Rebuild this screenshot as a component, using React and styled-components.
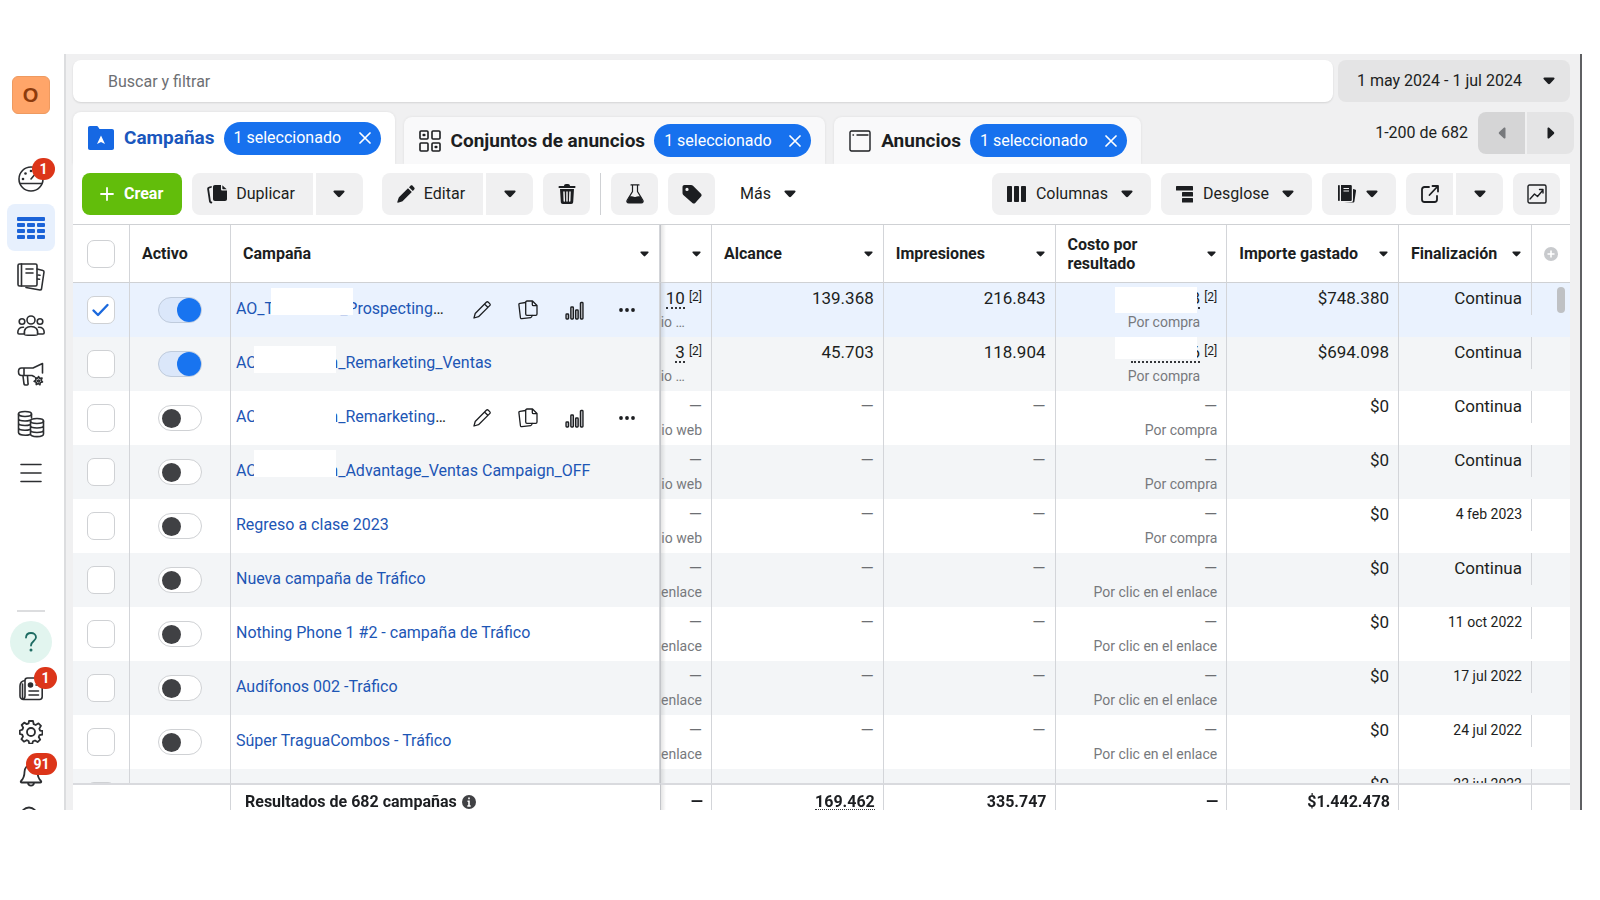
import styled, { createGlobalStyle, css } from "styled-components";

const GlobalStyle = createGlobalStyle`
  *, *::before, *::after {
    box-sizing: border-box;
  }

  body {
    margin: 0;
    background: #fff;
    color: #1c1e21;
    font: 16px/24px Roboto, "Liberation Sans", sans-serif;
  }

  button, input {
    font: inherit;
    color: inherit;
  }

  button {
    border: 0;
    padding: 0;
    background: none;
    cursor: pointer;
  }

  svg {
    display: block;
    flex: none;
  }
`;

const Frame = styled.div`
  display: flex;
  height: calc(100vh - 144px);
  margin: 54px 18px 90px 0;
  overflow: hidden;
  border-right: 2px solid #5f6063;
`;

/* ---------- sidebar ---------- */

const Sidebar = styled.nav`
  flex: none;
  width: 66px;
  padding: 22px 3px 0 0;
  display: flex;
  flex-direction: column;
  align-items: center;
  border-right: 2px solid #dcdddf;
  background: #fff;
`;

const Avatar = styled.button`
  flex: none;
  width: 38px;
  height: 38px;
  margin-bottom: 41px;
  border: 1px solid #ee9a60;
  border-radius: 6px;
  background: #ffa569;
  color: #8d3b0c;
  font-family: "Liberation Sans", sans-serif;
  font-size: 20px;
  font-weight: 700;
`;

const NavItem = styled.button`
  flex: none;
  position: relative;
  display: flex;
  align-items: center;
  justify-content: center;
  width: 48px;
  height: ${(p) => (p.$compact ? 43 : 47)}px;
  margin-bottom: ${(p) => (p.$compact ? 0 : 2)}px;
  border-radius: 8px;
  background: ${(p) => (p.$active ? "#e7f0fd" : "none")};
  color: ${(p) => (p.$active ? "#1b63d8" : "#2c2e31")};
`;

const Badge = styled.span`
  position: absolute;
  top: ${(p) => (p.$compact ? 0 : 3)}px;
  right: ${(p) => (p.$compact ? -2 : 0)}px;
  min-width: 22px;
  padding: 0 7px;
  border-radius: 11px;
  background: #dc3519;
  color: #fff;
  font-size: 14px;
  font-weight: 700;
  line-height: 22px;
  text-align: center;
`;

const NavRule = styled.hr`
  flex: none;
  width: 28px;
  margin: auto 0 9px;
  border: 0;
  border-top: 2px solid #dcdddf;
`;

const HelpButton = styled.button`
  flex: none;
  display: flex;
  align-items: center;
  justify-content: center;
  width: 42px;
  height: 42px;
  margin-bottom: 4px;
  border-radius: 50%;
  background: #e2f5ef;
  color: #1d6b62;
`;

const NavBottom = styled.div`
  flex: none;
  display: flex;
  flex-direction: column;
  align-items: center;
  height: 189px;
`;

/* ---------- top area ---------- */

const Main = styled.main`
  flex: 1;
  min-width: 0;
  display: flex;
  flex-direction: column;
  padding: 6px 10px 0 7px;
  background: #f0f0f1;
`;

const SearchRow = styled.div`
  flex: none;
  display: flex;
  gap: 5px;
`;

const SearchInput = styled.input`
  flex: 1;
  min-width: 0;
  height: 42px;
  padding: 0 35px;
  border: 0;
  border-radius: 8px;
  background: #fff;
  box-shadow: 0 1px 2px rgba(0, 0, 0, 0.12);

  &::placeholder {
    color: #6d6f73;
    opacity: 1;
  }
`;

const DateButton = styled.button`
  display: flex;
  align-items: center;
  justify-content: space-between;
  width: 232px;
  height: 42px;
  padding: 0 15px 0 19px;
  border-radius: 8px;
  background: #e4e4e5;
`;

const TabsRow = styled.div`
  flex: none;
  display: flex;
  align-items: flex-end;
  gap: 9px;
  height: 62px;
`;

const Tab = styled.div`
  display: flex;
  align-items: center;
  gap: 9px;
  height: ${(p) => (p.$active ? 52 : 47)}px;
  padding: 0 14px 0 15px;
  border-radius: 8px 8px 0 0;
  background: ${(p) => (p.$active ? "#fff" : "#f9f9fa")};
  color: ${(p) => (p.$active ? "#1a57bd" : "#1c1e21")};
  box-shadow: 0 0 3px rgba(0, 0, 0, 0.08);

  > svg {
    margin-right: 1px;
  }
`;

const TabTitle = styled.a`
  color: inherit;
  font-size: 19px;
  font-weight: 700;
  text-decoration: none;
`;

const Pill = styled.button`
  display: flex;
  align-items: center;
  justify-content: space-between;
  width: 157px;
  height: 33px;
  padding: 0 10px;
  border-radius: 17px;
  background: #1771ee;
  color: #fff;
  white-space: nowrap;
`;

const Pager = styled.div`
  align-self: flex-start;
  display: flex;
  align-items: center;
  margin: 10px -4px 0 auto;
`;

const PagerText = styled.span`
  margin-right: 10px;
`;

const PagerButton = styled.button`
  display: flex;
  align-items: center;
  justify-content: center;
  width: 47px;
  height: 42px;
  background: #e4e4e5;
  border-radius: 0 8px 8px 0;

  &:first-of-type {
    margin-right: 2px;
    border-radius: 8px 0 0 8px;
  }

  &:disabled {
    background: #d5d5d6;
    color: #77797c;
  }
`;

/* ---------- toolbar ---------- */

const Panel = styled.section`
  flex: 1;
  min-height: 0;
  display: flex;
  flex-direction: column;
  background: #fff;
`;

const Toolbar = styled.div`
  flex: none;
  display: flex;
  align-items: center;
  gap: 10px;
  height: 61px;
  padding: 0 10px 0 9px;
  border-bottom: 1px solid #cfd1d4;
`;

const ToolButton = styled.button`
  display: flex;
  align-items: center;
  justify-content: center;
  gap: 9px;
  height: 42px;
  min-width: 47px;
  padding: ${(p) => (p.$wide ? "0 18px 0 15px" : "0 13px")};
  border-radius: 8px;
  background: ${(p) => (p.$plain ? "none" : "#f0f0f1")};
  white-space: nowrap;
`;

const CreateButton = styled(ToolButton)`
  gap: 10px;
  padding: 0 19px 0 18px;
  background: #62bd0b;
  color: #fff;
  font-weight: 700;
`;

const Split = styled.div`
  display: flex;
  gap: 3px;
  margin-right: ${(p) => (p.$spaced ? 9 : 0)}px;

  ${ToolButton}:first-child {
    border-radius: 8px 0 0 8px;
  }

  ${ToolButton}:last-child {
    border-radius: 0 8px 8px 0;
  }
`;

const Divider = styled.span`
  width: 1px;
  height: 42px;
  background: #cfd1d4;
`;

const Spacer = styled.span`
  flex: 1;
`;

const CaretGap = styled.span`
  margin-left: 4px;
`;

/* ---------- table ---------- */

const TableArea = styled.div`
  flex: 1;
  min-height: 0;
  overflow: hidden;
`;

const Table = styled.table`
  width: 100%;
  table-layout: fixed;
  border-spacing: 0;
`;

const line = "1px solid #d3d5d9";

const edgeShadow = css`
  border-left: 1px solid #c3c5c9;
  background-image: linear-gradient(to right, rgba(0, 0, 0, 0.1), transparent 5px);
`;

const HeadCell = styled.th`
  height: 58px;
  padding: ${(p) => (p.$center ? 0 : "0 10px 0 12px")};
  border-right: ${(p) => (p.$open ? "0" : line)};
  border-bottom: 1px solid #cfd1d4;
  line-height: 19px;
  text-align: ${(p) => (p.$center ? "center" : "left")};
  ${(p) => p.$edge && edgeShadow}
`;

const HeadInner = styled.div`
  display: flex;
  align-items: center;
  justify-content: space-between;
`;

const Row = styled.tr`
  background: ${(p) => (p.$selected ? "#eaf2fe" : "#fff")};

  &:nth-child(even) {
    background: #f3f5f7;
  }
`;

const Cell = styled.td`
  height: 54px;
  padding: 0;
  border-right: ${(p) => (p.$open ? "0" : line)};
  vertical-align: ${(p) => (p.$middle ? "middle" : "top")};
  ${(p) => p.$edge && edgeShadow}
`;

const Checkbox = styled.input`
  appearance: none;
  display: block;
  width: 28px;
  height: 28px;
  margin: 0 auto;
  border: 1px solid #cfd1d4;
  border-radius: 7px;
  background: #fff;

  &:checked {
    background: #fff
      url("data:image/svg+xml,%3Csvg xmlns='http://www.w3.org/2000/svg' viewBox='0 0 28 28'%3E%3Cpath d='M6.500 14.500l4.500 4.500 9.500-10' fill='none' stroke='%231b69dd' stroke-width='2.400' stroke-linecap='round' stroke-linejoin='round'/%3E%3C/svg%3E")
      center / 28px 28px no-repeat;
  }
`;

const Toggle = styled.input`
  appearance: none;
  display: flex;
  align-items: center;
  width: 44px;
  height: 26px;
  margin: 0 auto;
  padding: 0 3px;
  border: 1px solid #cfd1d4;
  border-radius: 13px;
  background: #fff;

  &::before {
    content: "";
    width: 19px;
    height: 19px;
    border-radius: 50%;
    background: #404144;
  }

  &:checked {
    justify-content: flex-end;
    padding: 0;
    border-color: #bfcbdc;
    background: #dbe7fa;
  }

  &:checked::before {
    width: 24px;
    height: 24px;
    background: #1874f0;
  }
`;

const NameRow = styled.div`
  display: flex;
  align-items: center;
  justify-content: space-between;
  padding: 0 24px 0 5px;
`;

const NameLink = styled.a`
  color: #1d56b5;
  text-decoration: none;
  white-space: nowrap;
  padding-bottom: 3px;
`;

const NameText = styled.span`
  display: flex;
  align-items: center;
  height: 24px;
`;

const Mask = styled.span`
  flex: none;
  position: relative;
  z-index: 1;
  width: 82px;
  height: 27px;
  margin: 0 ${(p) => -p.$tuck}px ${(p) => p.$lift}px -3px;
  background: #fff;
`;

const Ellipsis = styled.span`
  color: #1c1e21;
`;

const Actions = styled.span`
  display: flex;
  align-items: center;
  gap: 27px;

  button:last-child {
    margin-left: 8px;
  }
`;

const Metric = styled.div`
  display: flex;
  justify-content: flex-end;
  gap: 4px;
  height: ${(p) => (p.$short ? 32 : 54)}px;
  padding: 3px 9px 0 0;
  overflow: hidden;
  border-right: ${(p) => (p.$short ? line : "0")};
  text-align: right;
  white-space: nowrap;
`;

const Value = styled.div`
  font-size: ${(p) => (p.$small ? 14 : 17)}px;
  color: ${(p) => (p.$muted ? "#6d6f73" : "inherit")};
`;

const Sub = styled.div`
  color: #77797d;
  font-size: 14px;
`;

const Note = styled.a`
  color: inherit;
  font-size: 12px;
  line-height: 22px;
  text-decoration: none;
`;

const Dotted = styled.span`
  display: inline-block;
  min-width: ${(p) => (p.$cost ? 69 : 0)}px;
  border-bottom: 2px dotted #34363a;
  line-height: 17px;
`;

const CostMask = styled.span`
  position: absolute;
  top: ${(p) => (p.$high ? -7 : 1)}px;
  right: 3px;
  width: 82px;
  height: 26px;
  background: #fff;
`;

const CostBox = styled.div`
  position: relative;
`;

const ScrollThumb = styled.div`
  width: 8px;
  height: 26px;
  margin: 4px 5px 0 auto;
  border-radius: 4px;
  background: #bfc1c4;
`;

const AddColumn = styled.button`
  display: block;
  margin: 0 auto;
  color: #c8cacd;
`;

const FootCell = styled.td`
  position: sticky;
  bottom: 0;
  z-index: 2;
  padding: 0;
  border-top: 2px solid #d9dade;
  border-right: ${(p) => (p.$open ? "0" : line)};
  background-color: #fff;
  font-weight: 700;
  ${(p) => p.$edge && edgeShadow}
`;

const FootInner = styled.div`
  display: flex;
  align-items: center;
  justify-content: ${(p) => (p.$left ? "flex-start" : "flex-end")};
  gap: 5px;
  height: 25px;
  padding: 9px 8px 0 14px;
  line-height: 16px;
  white-space: nowrap;

  ${Dotted} {
    border-bottom-width: 1px;
    line-height: 15px;
  }
`;

/* ---------- icons ---------- */

const Icon = ({ size = 26, box = 26, width = 1.8, children }) => (
  <svg
    width={size}
    height={size}
    viewBox={`0 0 ${box} ${box}`}
    fill="none"
    stroke="currentColor"
    strokeWidth={width}
    strokeLinecap="round"
    strokeLinejoin="round"
    aria-hidden="true"
  >
    {children}
  </svg>
);

const Caret = ({ small }) => (
  <svg width={small ? 9 : 12} height={small ? 6 : 8} viewBox="0 0 12 8" fill="currentColor" aria-hidden="true">
    <path d="M1.500.5h9c1 0 1.400 1 .7 1.700L7 6.800c-.6.600-1.400.600-2 0L.8 2.200C.1 1.500.5.5 1.500.5z" />
  </svg>
);

const Side = ({ left }) => (
  <svg width="8" height="12" viewBox="0 0 8 12" fill="currentColor" aria-hidden="true">
    {left ? (
      <path d="M7.500 1.500v9c0 1-1 1.400-1.700.7L1.200 7c-.6-.6-.6-1.400 0-2L5.800.8C6.500.1 7.500.5 7.500 1.500z" />
    ) : (
      <path d="M.5 1.500v9c0 1 1 1.400 1.700.7L6.800 7c.6-.6.600-1.400 0-2L2.200.8C1.500.1.5.5.5 1.500z" />
    )}
  </svg>
);

const GaugeIcon = () => (
  <Icon width={1.6}>
    <circle cx="13" cy="13" r="12" />
    <path d="M2.500 17.500h21M13 13l5-6" />
    <g fill="currentColor" stroke="none">
      <circle cx="5" cy="13" r="1.300" />
      <circle cx="7.500" cy="7.500" r="1.300" />
      <circle cx="13" cy="5" r="1.300" />
    </g>
  </Icon>
);

const GridIcon = () => (
  <svg width="28" height="24" viewBox="0 0 28 24" fill="currentColor" aria-hidden="true">
    <rect x="0" y="1" width="28" height="4" rx="1" />
    {[7, 13, 19].map((y) =>
      [0, 10, 20].map((x) => <rect key={`${x}-${y}`} x={x} y={y} width="8" height="4" rx="1" />)
    )}
  </svg>
);

const BooksIcon = () => (
  <Icon size={28} box={28} width={1.6}>
    <rect x="1" y="1" width="19" height="22" rx="1.500" />
    <path d="M4.500 1v22M9 6h7M9 10h7M20 6l6 1.500c1 .2 1 .8 1 1.500l-2.500 17c-.2 1-.8 1-1.500 1L9 24.500M21 12l2 .3M20.500 16l2 .3" />
  </Icon>
);

const PeopleIcon = () => (
  <Icon size={28} box={28} width={1.6}>
    <circle cx="14" cy="8" r="4" />
    <circle cx="5" cy="9.500" r="2.800" />
    <circle cx="23" cy="9.500" r="2.800" />
    <path d="M7.500 22.500c-1-6 2.500-8 6.500-8s7.500 2 6.500 8c-.2 1-12.800 1-13 0zM6.500 22H2c-1 0-1.200-.5-1.200-1.500 0-3.500 2-5.500 5.700-5.300M21.500 22H26c1 0 1.200-.5 1.200-1.500 0-3.500-2-5.500-5.700-5.300" />
  </Icon>
);

const MegaphoneIcon = () => (
  <Icon size={28} box={28} width={1.6}>
    <path d="M25.500 12V2.500L16 7H4.500C2 7 1.500 9 1.500 10.500s.5 4 3 4H15l2.500 1.200M7 7v7.500M6 15l1 8c.2 1 .8 1 1.500 1h1.500c1 0 1.200-.5 1-1.500l-.5-7.500" />
    <path d="M21.500 15.500l1.200 1.900 2.300-.3-.9 2.200 1.400 1.700-2.200.5-.4 2.300-1.600-1.300-2 1.100-.1-2.300-2.100-1 1.900-1.300-.4-2.300 2.100.6z" />
    <circle cx="21.500" cy="20" r="1" />
  </Icon>
);

const CoinsIcon = () => (
  <Icon size={28} box={28} width={1.6}>
    <ellipse cx="8" cy="4" rx="6.500" ry="2.500" />
    <path d="M1.500 4v18.500c0 1.500 3 2.800 7 2.800 1.500 0 3-.2 4.500-.8M14.500 4v4M1.500 8.500c0 1.500 3 2.500 6.500 2.500 2 0 3.500-.2 5-.8M1.500 13c0 1.500 3 2.500 6.500 2.500 2 0 3.500-.2 5-.8M1.500 17.800c0 1.500 3 2.500 6.500 2.500 2 0 3.500-.2 5-.8" />
    <ellipse cx="20" cy="11" rx="6.500" ry="2.500" />
    <path d="M13.500 11v13c0 1.500 3 2.600 6.500 2.600s6.500-1.100 6.500-2.600V11M13.500 15.500c0 1.500 3 2.500 6.500 2.500s6.500-1 6.500-2.500M13.500 20c0 1.500 3 2.500 6.500 2.500s6.500-1 6.500-2.500" />
  </Icon>
);

const MenuIcon = () => (
  <Icon size={28} box={28} width={1.6}>
    <path d="M4 5.500h20M4 14h20M4 22.500h20" />
  </Icon>
);

const HelpIcon = () => (
  <Icon size={22} box={22} width={1.800}>
    <path d="M6 6.500C6.200 3.500 8.500 2 11 2c2.800 0 5 1.700 5 4.300 0 3.700-5 3.700-5 8.200" />
    <circle cx="11" cy="19" r="1" fill="currentColor" stroke="none" />
    <circle cx="11" cy="19" r=".6" />
  </Icon>
);

const NewsIcon = () => (
  <Icon size={24} box={24} width={1.600}>
    <path d="M6 3.500C6 2 7 1 8.500 1H21c1.500 0 2.200 1 2.200 2.500v16c0 1.800-1 3-2.700 3H4.500C2.500 22.500 1 21 1 19V9c0-3 2-5 5-5.500zM6 3.500V19c0 2-.8 3-2.500 3.200M3.500 7v14" />
    <circle cx="11.500" cy="8" r="2" fill="currentColor" />
    <path d="M10 14h9.500M10 18h9.500M17 8h2.500" />
  </Icon>
);

const GearIcon = () => (
  <Icon size={24} box={24} width={1.800}>
    <circle cx="12" cy="12" r="4" />
    <path d="M10 1h4l.7 3.200 2 .8 2.800-1.700 2.500 2.500L20.300 8.600l.8 2L23.500 11v3.500l-3 .7-.8 1.800 1.500 2.600-2.600 2.500-2.600-1.600-2 .8-.7 2.400h-3L9.600 21l-2-.8-2.700 1.500-2.500-2.500L4 16.600l-.8-2L.8 14v-3.500l2.600-.8.8-2L2.700 5l2.500-2.400 2.600 1.500 1.800-.7z" />
  </Icon>
);

const BellIcon = () => (
  <Icon size={24} box={24} width={1.800}>
    <path d="M12 2c-4 0-6.500 3-6.500 7 0 5-1.500 7-3.500 9-.6.700-.2 1.500.8 1.500h18.400c1 0 1.400-.8.8-1.500-2-2-3.500-4-3.500-9 0-4-2.500-7-6.500-7zM9 20c.3 3.500 5.700 3.500 6 0" />
  </Icon>
);

const SearchIcon = () => (
  <Icon size={24} box={24} width={1.800}>
    <circle cx="10" cy="9.500" r="8" />
    <path d="M16 15.500l7 7" />
  </Icon>
);

const FolderIcon = () => (
  <svg width="26" height="24" viewBox="0 0 26 24" aria-hidden="true">
    <path d="M2 0h6.500c.8 0 1.200.3 1.700 1l1.300 2H24c1.300 0 2 .8 2 2v17c0 1.300-.7 2-2 2H2c-1.300 0-2-.7-2-2V2C0 .8.700 0 2 0z" fill="#1668e3" />
    <path d="M13 9.500l4 8.500-4-2-4 2z" fill="#fff" />
  </svg>
);

const SquaresIcon = () => (
  <Icon size={22} box={22} width={1.600}>
    <rect x="1" y="1" width="8" height="8" rx="1" />
    <rect x="13" y="1" width="8" height="8" rx="1" />
    <rect x="1" y="13" width="8" height="8" rx="1" />
    <rect x="13" y="13" width="8" height="8" rx="1" />
    <path d="M4.700 5h.6M16.700 17h.6" strokeWidth="2.600" />
  </Icon>
);

const WindowIcon = () => (
  <Icon size={22} box={22} width={1.400}>
    <rect x="1" y="1" width="20" height="20" rx="1.500" />
    <path d="M8 5h11M4 5h.5" />
  </Icon>
);

const CloseIcon = () => (
  <Icon size={12} box={12} width={1.700}>
    <path d="M1 1l10 10M11 1L1 11" />
  </Icon>
);

const PlusIcon = () => (
  <Icon size={14} box={14} width={1.800}>
    <path d="M7 1v12M1 7h12" />
  </Icon>
);

const DuplicateIcon = () => (
  <svg width="20" height="20" viewBox="0 0 20 20" fill="currentColor" aria-hidden="true">
    <path d="M8 1h6v4c0 1 .5 1.500 1.500 1.500H20V15c0 1.300-.7 2-2 2H8c-1.300 0-2-.7-2-2V3c0-1.300.7-2 2-2z" />
    <path d="M15.300 1.200l4.400 4.100h-3.600c-.5 0-.8-.3-.8-.8z" />
    <path d="M4 3L2 3.600c-.8.200-1 .7-.9 1.400L3 17.500c.1.800.6 1.100 1.400 1" fill="none" stroke="currentColor" strokeWidth="1.800" strokeLinecap="round" />
  </svg>
);

const PencilIcon = () => (
  <svg width="18" height="18" viewBox="0 0 18 18" fill="currentColor" aria-hidden="true">
    <path d="M11 3.200L14.800 7 6 15.800c-.3.300-.6.500-1 .6L.9 17.700c-.4.100-.7-.2-.6-.6L1.600 13c.1-.4.300-.7.600-1zM12 2.200L13.500.8c.6-.6 1.500-.6 2.100 0l1.600 1.600c.6.600.6 1.500 0 2.100L15.800 6z" />
  </svg>
);

const TrashIcon = () => (
  <svg width="18" height="20" viewBox="0 0 18 20" fill="currentColor" aria-hidden="true">
    <path d="M6 2c0-1.200.8-2 2-2h2c1.200 0 2 .8 2 2h4.500c.8 0 1 .4 1 .9s-.3 1-1 1h-15c-.7 0-1-.4-1-1s.3-.9 1-.9z" />
    <path d="M2 5h14l-.8 13c-.1 1.200-.8 2-2 2H4.800c-1.200 0-1.900-.8-2-2z" />
    <path d="M6 8l.3 9M9 8v9M12 8l-.3 9" stroke="#f0f0f1" strokeWidth="1.500" strokeLinecap="round" />
  </svg>
);

const FlaskIcon = () => (
  <svg width="18" height="20" viewBox="0 0 18 20" aria-hidden="true">
    <path d="M5 .9h8M6.500 1v6.500L1.300 16c-.9 1.600-.3 3 1.500 3h12.400c1.800 0 2.400-1.400 1.500-3l-5.200-8.500V1" fill="none" stroke="currentColor" strokeWidth="1.200" strokeLinecap="round" />
    <path d="M3.500 12.500c2-.8 4.300.8 5.800.4 1.500-.5 3.200-.7 5.200-.4l2.200 4c.6 1.500.2 2.500-1.500 2.500H2.800c-1.700 0-2.100-1-1.500-2.500z" fill="currentColor" />
  </svg>
);

const TagIcon = () => (
  <svg width="20" height="20" viewBox="0 0 20 20" fill="currentColor" fillRule="evenodd" aria-hidden="true">
    <path d="M2.500 1H9c.8 0 1.500.2 2 .8l8 8c.8.800.8 2 0 2.800l-5.800 6.300c-.8.800-2 .8-2.800 0L1.300 11C.7 10.400.500 9.700.500 9V3c0-1.200.8-2 2-2zM5 3.800a1.600 1.600 0 1 0 0 3.200 1.600 1.600 0 0 0 0-3.200z" />
  </svg>
);

const ColumnsIcon = () => (
  <svg width="20" height="16" viewBox="0 0 20 16" fill="currentColor" aria-hidden="true">
    <rect x="0" width="5" height="16" rx=".8" />
    <rect x="7" width="5" height="16" rx=".8" />
    <rect x="14" width="5" height="16" rx=".8" />
  </svg>
);

const BreakdownIcon = () => (
  <svg width="18" height="18" viewBox="0 0 18 18" fill="currentColor" aria-hidden="true">
    <rect x="0" y="1" width="17" height="4.500" rx=".6" />
    <rect x="6" y="7" width="11" height="4.500" rx=".6" />
    <rect x="6" y="13" width="11" height="4.500" rx=".6" />
  </svg>
);

const ReportsIcon = () => (
  <svg width="20" height="20" viewBox="0 0 20 20" fill="currentColor" aria-hidden="true">
    <rect x="1" y="1" width="1.800" height="16" rx=".8" />
    <path d="M4 1h9.500c.8 0 1.300.5 1.300 1.300v13.400c0 .8-.5 1.300-1.300 1.300H4z" />
    <path d="M16 5l2 .4c.8.100 1.200.7 1 1.500l-1.600 10.600c-.1.900-.7 1.200-1.500 1.100L7 18h7.500c1 0 1.500-.6 1.500-1.500z" />
    <path d="M6.500 4.500h5.500M6.500 7h5.500" stroke="#f0f0f1" strokeWidth="1.200" />
  </svg>
);

const ExportIcon = () => (
  <Icon size={18} box={18} width={1.800}>
    <path d="M8 2H3.500C2 2 1 3 1 4.500v10C1 16 2 17 3.500 17h10c1.500 0 2.500-1 2.500-2.500V11M11.500 1H17v5.500M16.500 1.500L8.500 10" />
  </Icon>
);

const ChartIcon = () => (
  <Icon size={20} box={20} width={1.400}>
    <rect x="1" y="1" width="18" height="18" rx="1.500" />
    <path d="M3 15l4.500-5 3 2.500L16 6M12.500 5.500H16V9" />
  </Icon>
);

const EditOutlineIcon = () => (
  <Icon size={18} box={18} width={1.300}>
    <path d="M13.300 1.200c.7-.7 1.400-.6 2 0l1.400 1.400c.7.700.7 1.400 0 2L5.500 15.700 1 17l1.200-4.500zM11.500 3l3.300 3.300" />
  </Icon>
);

const CopyOutlineIcon = () => (
  <Icon size={20} box={20} width={1.300}>
    <path d="M9 1h5.500L19 5.500V14c0 .8-.5 1.300-1.300 1.300H9c-.8 0-1.300-.5-1.300-1.300V2.300C7.700 1.500 8.200 1 9 1zM14.300 1.200v3.300c0 .8.500 1.200 1.200 1.200h3.300" />
    <path d="M7.500 2.500l-5.500.8c-.8.100-1.200.6-1.100 1.400l1.500 12.800c.1.800.6 1.200 1.400 1.100l9-1c.8-.1 1.200-.6 1.300-2.300" />
  </Icon>
);

const BarsIcon = () => (
  <Icon size={19} box={19} width={1.300}>
    <g fill="#b4b6ba">
      <rect x="1" y="13" width="2.600" height="5" rx=".8" />
      <rect x="5.800" y="6" width="2.600" height="12" rx=".8" />
      <rect x="10.600" y="9" width="2.600" height="9" rx=".8" />
      <rect x="15.400" y="1.500" width="2.600" height="16.500" rx=".8" />
    </g>
  </Icon>
);

const DotsIcon = () => (
  <svg width="16" height="6" viewBox="0 0 16 6" fill="currentColor" aria-hidden="true">
    <circle cx="2" cy="3" r="1.900" />
    <circle cx="8" cy="3" r="1.900" />
    <circle cx="14" cy="3" r="1.900" />
  </svg>
);

const AddIcon = () => (
  <svg width="14" height="14" viewBox="0 0 14 14" aria-hidden="true">
    <circle cx="7" cy="7" r="7" fill="currentColor" />
    <path d="M7 3.500v7M3.500 7h7" stroke="#fff" strokeWidth="1.600" />
  </svg>
);

const InfoIcon = () => (
  <svg width="14" height="14" viewBox="0 0 14 14" aria-hidden="true">
    <circle cx="7" cy="7" r="7" fill="#404144" />
    <path d="M7 2.500v1.800M5.500 6.300H7V11M5.300 11h3.400" stroke="#fff" strokeWidth="1.600" fill="none" />
  </svg>
);

/* ---------- data ---------- */

const rows = [
  { start: "AO_T", end: "_Prospecting", cut: true, tuck: 13, lift: 15, on: true, selected: true, actions: true, result: "10", resultSub: "io …", reach: "139.368", impressions: "216.843", cost: "8", costSub: "Por compra", spent: "$748.380", ends: "Continua" },
  { start: "AO", end: "n_Remarketing_Ventas", tuck: 7, lift: 7, on: true, result: "3", resultSub: "io …", reach: "45.703", impressions: "118.904", cost: "6", costSub: "Por compra", spent: "$694.098", ends: "Continua" },
  { start: "AO", end: "n_Remarketing", cut: true, tuck: 7, lift: 7, actions: true, resultSub: "io web", costSub: "Por compra", spent: "$0", ends: "Continua" },
  { start: "AO", end: "n_Advantage_Ventas Campaign_OFF", tuck: 7, lift: 14, resultSub: "io web", costSub: "Por compra", spent: "$0", ends: "Continua" },
  { name: "Regreso a clase 2023", resultSub: "io web", costSub: "Por compra", spent: "$0", ends: "4 feb 2023" },
  { name: "Nueva campaña de Tráfico", resultSub: "enlace", costSub: "Por clic en el enlace", spent: "$0", ends: "Continua" },
  { name: "Nothing Phone 1 #2 - campaña de Tráfico", resultSub: "enlace", costSub: "Por clic en el enlace", spent: "$0", ends: "11 oct 2022" },
  { name: "Audífonos 002 -Tráfico", resultSub: "enlace", costSub: "Por clic en el enlace", spent: "$0", ends: "17 jul 2022" },
  { name: "Súper TraguaCombos - Tráfico", resultSub: "enlace", costSub: "Por clic en el enlace", spent: "$0", ends: "24 jul 2022" },
  { name: "", spent: "$0", ends: "22 jul 2022", last: true },
];

/* ---------- parts ---------- */

function SelectedPill() {
  return (
    <Pill>
      1 seleccionado
      <CloseIcon />
    </Pill>
  );
}

function Heading({ label, ...rest }) {
  return (
    <HeadCell {...rest}>
      <HeadInner>
        <span>{label}</span>
        <Caret small />
      </HeadInner>
    </HeadCell>
  );
}

function CampaignRow({ row, index }) {
  // the last row is mostly under the totals, so it has no dashes to show
  const dash = row.last ? null : <Value $muted>—</Value>;
  return (
    <Row $selected={row.selected}>
      <Cell $middle>
        <Checkbox type="checkbox" aria-label={`Seleccionar fila ${index + 1}`} defaultChecked={row.selected} />
      </Cell>
      <Cell $middle>
        <Toggle type="checkbox" role="switch" aria-label={`Activar fila ${index + 1}`} defaultChecked={row.on} />
      </Cell>
      <Cell $middle>
        <NameRow>
          <NameLink href="#">
            {row.start ? (
              <NameText>
                {row.start}
                <Mask $tuck={row.tuck} $lift={row.lift} />
                {row.end}
                {row.cut && <Ellipsis>…</Ellipsis>}
              </NameText>
            ) : (
              row.name
            )}
          </NameLink>
          {row.actions && (
            <Actions>
              <button aria-label="Editar"><EditOutlineIcon /></button>
              <button aria-label="Duplicar"><CopyOutlineIcon /></button>
              <button aria-label="Ver gráficos"><BarsIcon /></button>
              <button aria-label="Más opciones"><DotsIcon /></button>
            </Actions>
          )}
        </NameRow>
      </Cell>
      <Cell $edge>
        <Metric>
          <div>
            {row.result ? <Value><Dotted>{row.result}</Dotted></Value> : dash}
            <Sub>{row.resultSub}</Sub>
          </div>
          {row.result && <Note href="#">[2]</Note>}
        </Metric>
      </Cell>
      <Cell><Metric>{row.reach ? <Value>{row.reach}</Value> : dash}</Metric></Cell>
      <Cell><Metric>{row.impressions ? <Value>{row.impressions}</Value> : dash}</Metric></Cell>
      <Cell>
        <Metric>
          <CostBox>
            {row.cost ? <Value><Dotted $cost>{row.cost}</Dotted></Value> : dash}
            {row.cost && <CostMask $high={!row.selected} />}
            <Sub>{row.costSub}</Sub>
          </CostBox>
          {row.cost && <Note href="#">[2]</Note>}
        </Metric>
      </Cell>
      <Cell><Metric><Value>{row.spent}</Value></Metric></Cell>
      <Cell $open>
        <Metric $short>
          <Value $small={row.ends !== "Continua"}>{row.ends}</Value>
        </Metric>
      </Cell>
      <Cell $open>{index === 0 && <ScrollThumb />}</Cell>
    </Row>
  );
}

export default function App() {
  return (
    <>
      <GlobalStyle />
      <Frame>
        <Sidebar>
          <Avatar>O</Avatar>
          <NavItem aria-label="Resumen de la cuenta"><GaugeIcon /><Badge>1</Badge></NavItem>
          <NavItem aria-label="Campañas" $active><GridIcon /></NavItem>
          <NavItem aria-label="Informes"><BooksIcon /></NavItem>
          <NavItem aria-label="Públicos"><PeopleIcon /></NavItem>
          <NavItem aria-label="Configuración de anuncios"><MegaphoneIcon /></NavItem>
          <NavItem aria-label="Facturación"><CoinsIcon /></NavItem>
          <NavItem aria-label="Todas las herramientas"><MenuIcon /></NavItem>
          <NavRule />
          <NavBottom>
            <HelpButton aria-label="Ayuda"><HelpIcon /></HelpButton>
            <NavItem $compact aria-label="Novedades"><NewsIcon /><Badge $compact>1</Badge></NavItem>
            <NavItem $compact aria-label="Configuración"><GearIcon /></NavItem>
            <NavItem $compact aria-label="Notificaciones"><BellIcon /><Badge $compact>91</Badge></NavItem>
            <NavItem $compact aria-label="Buscar"><SearchIcon /></NavItem>
          </NavBottom>
        </Sidebar>

        <Main>
          <SearchRow>
            <SearchInput placeholder="Buscar y filtrar" aria-label="Buscar y filtrar" />
            <DateButton>
              1 may 2024 - 1 jul 2024
              <Caret />
            </DateButton>
          </SearchRow>

          <TabsRow>
            <Tab $active>
              <FolderIcon />
              <TabTitle href="#">Campañas</TabTitle>
              <SelectedPill />
            </Tab>
            <Tab>
              <SquaresIcon />
              <TabTitle href="#">Conjuntos de anuncios</TabTitle>
              <SelectedPill />
            </Tab>
            <Tab>
              <WindowIcon />
              <TabTitle href="#">Anuncios</TabTitle>
              <SelectedPill />
            </Tab>
            <Pager>
              <PagerText>1-200 de 682</PagerText>
              <PagerButton disabled aria-label="Anterior"><Side left /></PagerButton>
              <PagerButton aria-label="Siguiente"><Side /></PagerButton>
            </Pager>
          </TabsRow>

          <Panel>
            <Toolbar>
              <CreateButton><PlusIcon />Crear</CreateButton>
              <Split $spaced>
                <ToolButton $wide><DuplicateIcon />Duplicar</ToolButton>
                <ToolButton aria-label="Opciones de duplicar"><Caret /></ToolButton>
              </Split>
              <Split>
                <ToolButton $wide><PencilIcon />Editar</ToolButton>
                <ToolButton aria-label="Opciones de edición"><Caret /></ToolButton>
              </Split>
              <ToolButton aria-label="Eliminar"><TrashIcon /></ToolButton>
              <Divider />
              <ToolButton aria-label="Prueba A/B"><FlaskIcon /></ToolButton>
              <ToolButton aria-label="Etiquetas"><TagIcon /></ToolButton>
              <ToolButton $plain $wide>Más<CaretGap><Caret /></CaretGap></ToolButton>
              <Spacer />
              <ToolButton $wide><ColumnsIcon />Columnas<CaretGap><Caret /></CaretGap></ToolButton>
              <ToolButton $wide><BreakdownIcon />Desglose<CaretGap><Caret /></CaretGap></ToolButton>
              <ToolButton $wide aria-label="Informes"><ReportsIcon /><Caret /></ToolButton>
              <Split>
                <ToolButton aria-label="Exportar"><ExportIcon /></ToolButton>
                <ToolButton aria-label="Opciones de exportación"><Caret /></ToolButton>
              </Split>
              <ToolButton aria-label="Gráficos"><ChartIcon /></ToolButton>
            </Toolbar>

            <TableArea>
              <Table>
                <colgroup>
                  <col width="57" />
                  <col width="101" />
                  <col width="429" />
                  <col width="52" />
                  <col span="4" />
                  <col width="133" />
                  <col width="38" />
                </colgroup>
                <thead>
                  <tr>
                    <HeadCell $center><Checkbox type="checkbox" aria-label="Seleccionar todo" /></HeadCell>
                    <HeadCell>Activo</HeadCell>
                    <Heading label="Campaña" />
                    <Heading label="" $edge />
                    <Heading label="Alcance" />
                    <Heading label="Impresiones" />
                    <Heading label={<>Costo por<br />resultado</>} />
                    <Heading label="Importe gastado" />
                    <Heading label="Finalización" />
                    <HeadCell $center $open>
                      <AddColumn aria-label="Agregar columna"><AddIcon /></AddColumn>
                    </HeadCell>
                  </tr>
                </thead>
                <tbody>
                  {rows.map((row, i) => (
                    <CampaignRow key={i} row={row} index={i} />
                  ))}
                </tbody>
                <tfoot>
                  <tr>
                    <FootCell $open />
                    <FootCell />
                    <FootCell $open><FootInner $left>Resultados de 682 campañas <InfoIcon /></FootInner></FootCell>
                    <FootCell $edge><FootInner>—</FootInner></FootCell>
                    <FootCell><FootInner><Dotted>169.462</Dotted></FootInner></FootCell>
                    <FootCell><FootInner>335.747</FootInner></FootCell>
                    <FootCell><FootInner>—</FootInner></FootCell>
                    <FootCell><FootInner>$1.442.478</FootInner></FootCell>
                    <FootCell />
                    <FootCell $open />
                  </tr>
                </tfoot>
              </Table>
            </TableArea>
          </Panel>
        </Main>
      </Frame>
    </>
  );
}
